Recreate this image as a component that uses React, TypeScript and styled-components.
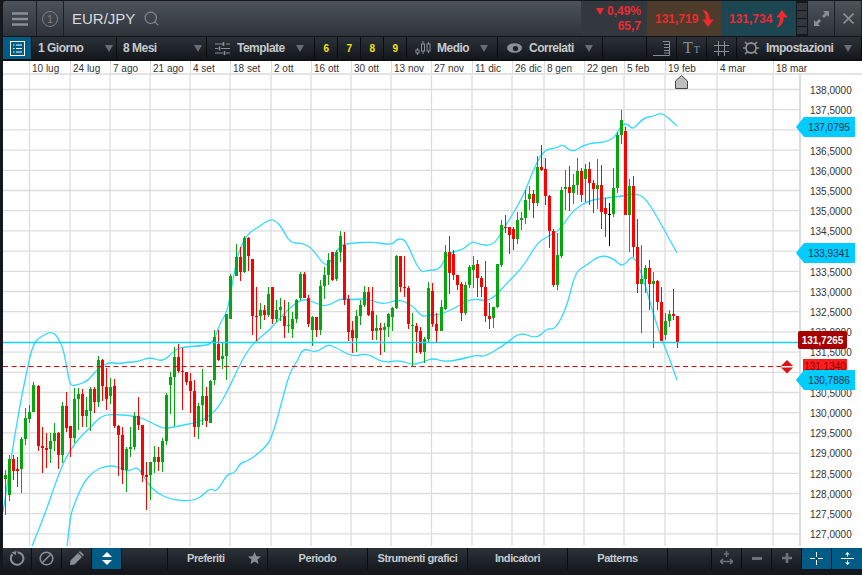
import React from "react";
import styled, { createGlobalStyle } from "styled-components";
import { Search } from "lucide-react";

type Row = [string, number, number, number, number];

interface Segment {
  ox: number;
  oy: number;
  start: number;
  rows: Row[];
}

// candles read off the chart: colour, high, body top, body bottom, low
const segments: Segment[] = [
  {
    ox: 0, oy: 330, start: 16,
    rows: [
      ["g", 420, 435, 447, 556], ["g", 375, 387, 495, 512], ["r", 375, 387, 423, 450], ["r", 380, 417, 423, 470],
      ["g", 320, 327, 417, 490], ["g", 235, 265, 327, 345], ["g", 225, 245, 267, 280], ["g", 155, 165, 245, 245],
    ],
  },
  {
    ox: 0, oy: 330, start: 115,
    rows: [
      ["r", 165, 168, 348, 362], ["r", 292, 348, 354, 428], ["r", 310, 354, 360, 415], ["g", 310, 333, 357, 400],
      ["g", 280, 309, 333, 362], ["r", 305, 309, 375, 417], ["g", 217, 228, 375, 400], ["r", 187, 228, 294, 305],
      ["r", 287, 288, 324, 380], ["g", 175, 207, 324, 340], ["g", 175, 192, 207, 300], ["r", 178, 192, 258, 290],
      ["g", 200, 240, 258, 290], ["g", 172, 177, 243, 303], ["r", 172, 177, 216, 250], ["g", 78, 90, 216, 230],
      ["r", 87, 90, 168, 213], ["r", 113, 171, 207, 240], ["g", 145, 171, 198, 222], ["r", 148, 168, 288, 295],
      ["r", 285, 288, 315, 438], ["r", 290, 315, 420, 462], ["g", 350, 357, 420, 487], ["g", 292, 351, 357, 381],
      ["g", 245, 258, 351, 360], ["r", 200, 258, 285, 300], ["r", 285, 285, 435, 455], ["r", 395, 435, 441, 540],
      ["g", 395, 396, 435, 510], ["g", 348, 381, 396, 430], ["r", 350, 381, 396, 423], ["g", 325, 333, 396, 425],
      ["g", 190, 195, 333, 345], ["g", 125, 141, 165, 252], ["g", 52, 81, 141, 288], ["r", 42, 81, 123, 128],
      ["r", 55, 123, 126, 240], ["r", 125, 126, 156, 165], ["r", 130, 153, 183, 250], ["r", 150, 183, 290, 320],
      ["g", 220, 228, 290, 327], ["g", 118, 198, 225, 285], ["r", 170, 198, 273, 290], ["g", 150, 153, 278, 278],
      ["g", 0, 22, 150, 165], ["r", 0, 42, 90, 93],
    ],
  },
  {
    ox: 220, oy: 210, start: 7,
    rows: [["g", 397, 438, 447, 477], ["g", 312, 312, 438, 510], ["g", 192, 198, 327, 327]],
  },
  {
    ox: 220, oy: 210, start: 47,
    rows: [
      ["g", 102, 141, 198, 198], ["r", 110, 141, 186, 212], ["g", 78, 84, 186, 190], ["r", 80, 84, 138, 182],
      ["r", 147, 147, 318, 375], ["r", 230, 318, 321, 393], ["g", 278, 300, 318, 358], ["r", 285, 300, 315, 330],
      ["g", 232, 252, 315, 320], ["r", 232, 232, 327, 342], ["g", 270, 300, 327, 335], ["g", 265, 291, 300, 333],
      ["r", 270, 318, 348, 384], ["g", 275, 345, 348, 370], ["g", 305, 327, 357, 384], ["g", 268, 270, 327, 340],
      ["g", 186, 192, 265, 270], ["r", 186, 192, 265, 265], ["r", 255, 265, 342, 352], ["g", 318, 321, 360, 408],
      ["r", 320, 321, 360, 381], ["g", 210, 228, 360, 375], ["g", 170, 195, 228, 268], ["g", 130, 150, 195, 225],
      ["r", 125, 126, 210, 212], ["g", 120, 126, 207, 212], ["g", 63, 78, 126, 155], ["r", 66, 105, 270, 285],
      ["r", 255, 267, 366, 393], ["r", 333, 360, 384, 428], ["g", 300, 318, 384, 425], ["g", 270, 285, 318, 345],
      ["g", 228, 246, 285, 290], ["r", 232, 246, 315, 318], ["r", 232, 303, 363, 390], ["g", 315, 354, 363, 390],
      ["r", 340, 354, 360, 435], ["g", 340, 351, 360, 425], ["g", 308, 312, 351, 380], ["g", 290, 294, 321, 363],
      ["g", 135, 138, 294, 296], ["r", 138, 138, 231, 246], ["r", 138, 231, 234, 262], ["r", 228, 234, 342, 356],
      ["g", 310, 345, 347, 468], ["r", 340, 348, 366, 430], ["r", 350, 363, 426, 432], ["g", 380, 387, 426, 458],
      ["g", 215, 234, 387, 395], ["r", 220, 243, 342, 350], ["r", 310, 342, 363, 396],
    ],
  },
  {
    ox: 440, oy: 100, start: 2,
    rows: [
      ["g", 600, 621, 693, 693], ["g", 435, 456, 627, 630], ["r", 408, 456, 519, 582], ["r", 450, 462, 525, 540],
      ["r", 525, 525, 555, 570], ["r", 545, 552, 639, 663], ["g", 545, 555, 639, 645], ["g", 495, 501, 555, 565],
      ["g", 468, 495, 510, 565], ["r", 480, 492, 534, 592], ["r", 528, 534, 561, 590], ["r", 483, 561, 648, 665],
      ["r", 610, 648, 657, 686], ["g", 621, 621, 654, 684], ["g", 492, 492, 621, 624], ["g", 360, 375, 495, 500],
      ["r", 345, 380, 384, 398], ["r", 380, 381, 405, 462], ["r", 380, 387, 417, 450], ["g", 335, 360, 417, 432],
      ["g", 335, 354, 360, 390], ["g", 270, 300, 354, 372], ["g", 258, 282, 297, 330], ["r", 270, 282, 308, 354],
      ["g", 168, 201, 309, 318], ["r", 135, 201, 210, 213], ["r", 174, 207, 288, 315], ["r", 285, 288, 393, 444],
      ["r", 387, 393, 555, 560], ["g", 400, 465, 555, 570], ["g", 262, 270, 468, 475], ["g", 210, 261, 267, 330],
      ["r", 198, 261, 279, 333], ["g", 222, 255, 279, 313], ["g", 175, 213, 255, 285], ["r", 205, 213, 285, 305],
      ["g", 192, 207, 237, 305], ["r", 185, 207, 249, 315], ["r", 240, 249, 267, 340], ["g", 178, 255, 267, 327],
      ["r", 195, 255, 336, 387], ["r", 295, 324, 342, 410], ["k", 310, 342, 344, 438], ["g", 205, 264, 342, 352],
      ["g", 95, 105, 264, 280], ["g", 30, 60, 105, 132], ["r", 80, 93, 345, 345], ["g", 238, 258, 345, 455],
    ],
  },
  {
    ox: 440, oy: 100, start: 580,
    rows: [
      ["r", 228, 258, 440, 470], ["r", 358, 441, 552, 578], ["g", 435, 537, 552, 698], ["g", 495, 504, 537, 580],
      ["r", 480, 504, 552, 630], ["g", 515, 543, 552, 744], ["r", 540, 543, 606, 630], ["r", 560, 606, 723, 723],
      ["g", 640, 663, 705, 720], ["g", 630, 642, 663, 680], ["r", 567, 642, 648, 660], ["r", 648, 648, 726, 744],
    ],
  },
];

const upperBand: number[][] = [
  [3, 512], [8, 480], [14, 440], [20, 405], [26, 375], [33, 343], [42, 336], [50, 332], [55, 334], [58, 338], [63, 348], [67, 368], [70, 386],
  [77, 385], [88, 381], [98, 368], [110, 362], [118, 364], [128, 362], [137, 362], [150, 357], [163, 362], [175, 350], [183, 347],
  [200, 346], [213, 344], [220, 323], [227, 313], [233, 280], [238, 253], [247, 234], [260, 226], [270, 219], [276, 221], [282, 228],
  [290, 243], [302, 243], [312, 248], [325, 267], [332, 260], [340, 245], [353, 243], [373, 242], [392, 245], [397, 239], [403, 239], [407, 243],
  [420, 273], [428, 270], [440, 270], [447, 253], [463, 250], [472, 241], [478, 244], [493, 246], [503, 230], [523, 197], [532, 173],
  [543, 150], [557, 148], [563, 144], [572, 153], [587, 143], [612, 142], [622, 124], [628, 124], [633, 130], [643, 118], [655, 116],
  [662, 112], [677, 126],
];

const middleBand: number[][] = [
  [32, 546], [43, 520], [60, 470], [70, 450], [82, 435], [90, 428], [100, 417], [110, 414], [135, 416], [147, 420], [163, 429], [173, 427],
  [200, 422], [210, 415], [218, 408], [228, 390], [242, 360], [253, 343], [270, 330], [287, 310], [303, 298], [315, 303], [327, 307], [340, 298],
  [353, 300], [367, 298], [383, 305], [398, 299], [412, 305], [422, 317], [428, 315], [440, 315], [457, 307], [472, 298], [490, 302],
  [507, 283], [523, 267], [537, 243], [547, 237], [560, 230], [573, 210], [590, 200], [607, 198], [623, 196], [637, 193], [647, 200],
  [660, 222], [677, 253],
];

const lowerBand: number[][] = [
  [67, 546], [70, 520], [72, 510], [83, 483], [95, 470], [107, 466], [117, 466], [128, 472], [138, 466], [147, 483], [158, 494], [173, 500],
  [190, 501], [200, 498], [210, 488], [217, 492], [227, 474], [235, 473], [240, 463], [248, 461], [263, 450], [272, 438], [283, 397],
  [290, 372], [298, 360], [303, 348], [317, 353], [327, 344], [337, 348], [352, 357], [367, 353], [383, 363], [400, 360], [412, 365],
  [423, 362], [433, 358], [445, 362], [462, 359], [477, 355], [485, 357], [507, 343], [520, 332], [537, 339], [547, 328], [555, 330],
  [567, 307], [575, 272], [587, 265], [600, 255], [613, 258], [623, 268], [633, 253], [643, 277], [653, 313], [662, 340], [670, 360], [677, 380],
];

const gridX = [29.5, 70, 110, 150, 190, 230, 271, 311, 351, 391, 431.5, 472, 512, 544, 584, 624, 665, 717, 773];
const gridY = Array.from({ length: 23 }, (_, i) => 89.5 + i * 20.2);

const dates = [
  { label: "10 lug", x: 29 }, { label: "24 lug", x: 70 }, { label: "7 ago", x: 110 }, { label: "21 ago", x: 150 },
  { label: "4 set", x: 190 }, { label: "18 set", x: 230 }, { label: "2 ott", x: 271 }, { label: "16 ott", x: 311 },
  { label: "30 ott", x: 351 }, { label: "13 nov", x: 391 }, { label: "27 nov", x: 431 }, { label: "11 dic", x: 472 },
  { label: "26 dic", x: 512 }, { label: "8 gen", x: 544 }, { label: "22 gen", x: 584 }, { label: "5 feb", x: 624 },
  { label: "19 feb", x: 665 }, { label: "4 mar", x: 717 }, { label: "18 mar", x: 773 },
];

// these three sit fully under a badge, so their row stays empty
const covered = ["137,0000", "134,0000", "131,0000"];
const prices = Array.from({ length: 23 }, (_, i) => (138 - i * 0.5).toFixed(4).replace(".", ","));

const smooth = (pts: number[][]) => {
  let d = `M${pts[0][0]} ${pts[0][1]}`;
  for (let i = 1; i < pts.length - 1; i++) {
    const mx = (pts[i][0] + pts[i + 1][0]) / 2;
    const my = (pts[i][1] + pts[i + 1][1]) / 2;
    d += ` Q${pts[i][0]} ${pts[i][1]} ${mx} ${my}`;
  }
  const last = pts[pts.length - 1];
  return `${d} L${last[0]} ${last[1]}`;
};

const candleColor: Record<string, string> = { g: "#04a80c", r: "#ff0000", k: "#000000" };

const Global = createGlobalStyle`
  html, body {
    margin: 0;
    padding: 0;
    background: #14181d;
  }
  * {
    box-sizing: border-box;
  }
`;

const Frame = styled.div`
  width: 862px;
  height: 575px;
  padding: 1px 0 0 3px;
  overflow: hidden;
  background: #14181d;
  font-family: "Liberation Sans", Arial, sans-serif;
`;

const TopBar = styled.div`
  display: flex;
  height: 36px;
  border-bottom: 1px solid #101317;
  border-top-left-radius: 3px;
  background: linear-gradient(#4c535b, #2e3339);
`;

const TopCell = styled.div<{ $w: number }>`
  display: flex;
  align-items: center;
  justify-content: center;
  flex: none;
  width: ${(p) => p.$w}px;
  border-right: 1px solid #1b1f24;
`;

const NumberBadge = styled.span`
  display: flex;
  align-items: center;
  justify-content: center;
  width: 16px;
  height: 16px;
  border: 1px solid #7c8186;
  border-radius: 50%;
  color: #7c8186;
  font-size: 11px;
`;

const Symbol = styled.div`
  display: flex;
  align-items: center;
  gap: 8px;
  flex: 1;
  padding-left: 8px;
  color: #d9dbdd;
  font-size: 15px;
  svg {
    color: #858a8f;
  }
`;

const ChangeBox = styled.div`
  flex: none;
  width: 66px;
  padding: 3px 6px 0 0;
  background: #33383e;
  color: #ee2a2f;
  font-size: 12px;
  font-weight: bold;
  line-height: 15px;
  text-align: right;
`;

const ChangeTop = styled.div`
  display: flex;
  align-items: center;
  justify-content: flex-end;
  gap: 3px;
`;

const DownMark = styled.i`
  width: 0;
  height: 0;
  border-left: 4.5px solid transparent;
  border-right: 4.5px solid transparent;
  border-top: 7px solid #ee2a2f;
`;

const QuoteBox = styled.div<{ $buy?: boolean }>`
  display: flex;
  align-items: center;
  flex: none;
  gap: 3px;
  width: ${(p) => (p.$buy ? 75 : 74)}px;
  padding-left: 8px;
  background: ${(p) => (p.$buy ? "#1b4652" : "#4d3b2b")};
  color: #ee2a2f;
  font-size: 12px;
  font-weight: bold;
`;

const QuoteStack = styled.div`
  display: flex;
  flex-direction: column;
  flex: none;
  gap: 1px;
  width: 12px;
  padding: 2px 1px;
  background: #15191d;
`;

const StackCell = styled.span`
  flex: 1;
  background: #31373d;
`;

const ToolBar = styled.div`
  display: flex;
  height: 24px;
  border-bottom: 2px solid #0e1114;
  background: linear-gradient(#2c3138, #14181d);
  color: #c6cacd;
  font-size: 12px;
  font-weight: bold;
  letter-spacing: -0.5px;
`;

const ToolCell = styled.div<{ $w: number; $pad?: number; $center?: boolean }>`
  display: flex;
  align-items: center;
  justify-content: ${(p) => (p.$center ? "center" : "flex-start")};
  flex: none;
  width: ${(p) => p.$w}px;
  padding-left: ${(p) => p.$pad ?? 0}px;
  border-right: 1px solid #0a0c0e;
`;

const ActiveTool = styled(ToolCell)`
  background: #005b85;
`;

const Caret = styled.i<{ $gap: number }>`
  width: 0;
  height: 0;
  margin-left: ${(p) => p.$gap}px;
  border-left: 4px solid transparent;
  border-right: 4px solid transparent;
  border-top: 7px solid #686e74;
`;

const HotKey = styled.span`
  color: #f4e21a;
  font-size: 10px;
`;

const TextSize = styled.span`
  color: #8b9095;
  font-family: "Liberation Serif", serif;
  font-size: 16px;
  font-weight: normal;
  letter-spacing: 0;
  small {
    font-size: 10px;
    margin-left: 1px;
  }
`;

const DateAxis = styled.div`
  display: flex;
  height: 14px;
  border-bottom: 2px solid #e4e4e4;
  background: #fff;
`;

const DateCell = styled.div<{ $w: number }>`
  flex: none;
  width: ${(p) => p.$w}px;
  padding-left: 2px;
  border-left: 1px solid #dcdcdc;
  color: #333;
  font-size: 10px;
  line-height: 15px;
  white-space: nowrap;
`;

const DateLead = styled.div`
  flex: none;
  width: 26px;
`;

const ChartRow = styled.div`
  position: relative;
  display: flex;
  height: 473px;
  background: #fff;
`;

const Plot = styled.svg`
  display: block;
  flex: none;
  width: 796px;
  height: 473px;
`;

const PriceAxis = styled.div`
  flex: 1;
  height: 471px;
  padding: 6px 0 0 9px;
  border-left: 2px solid #dcdcdc;
`;

const Tick = styled.div`
  height: 20.2px;
  color: #333;
  font-size: 10px;
  line-height: 20.2px;
`;

const Badge = styled.div<{ $top: number }>`
  position: absolute;
  top: ${(p) => p.$top}px;
  display: flex;
  align-items: center;
  justify-content: center;
  font-size: 10px;
`;

const LastPrice = styled(Badge)`
  left: 795px;
  width: 49px;
  height: 18px;
  border-radius: 2px;
  background: #a80000;
  color: #fff;
  font-weight: bold;
`;

const OrderPrice = styled(Badge)`
  left: 800px;
  width: 44px;
  height: 15px;
  background: #ff1c1c;
  color: #8a0000;
`;

const BandPrice = styled(Badge)`
  left: 793px;
  width: 59px;
  height: 20px;
  padding-left: 7px;
  background: #00ccff;
  color: #10333f;
  clip-path: polygon(0 50%, 8px 0, 100% 0, 100% 100%, 8px 100%);
`;

const BottomBar = styled.div`
  display: flex;
  height: 21px;
  background: linear-gradient(#2c3239, #171b20);
  color: #c6cacd;
  font-size: 11px;
  font-weight: bold;
  letter-spacing: -0.45px;
`;

const BarCell = styled.div<{ $w: number; $active?: boolean; $pad?: number }>`
  display: flex;
  align-items: center;
  justify-content: ${(p) => (p.$pad ? "flex-start" : "center")};
  flex: none;
  width: ${(p) => p.$w}px;
  padding-bottom: 1px;
  padding-left: ${(p) => p.$pad ?? 0}px;
  border-right: 1px solid #0a0c0e;
  background: ${(p) => (p.$active ? "#005b85" : "transparent")};
`;

const grey = "#8a8f94";

const MenuIcon = () => (
  <svg width="16" height="14" viewBox="0 0 16 14">
    <path d="M0 1.5H16M0 7H16M0 12.5H16" stroke={grey} strokeWidth="2.6" />
  </svg>
);

const HookArrow = ({ up }: { up?: boolean }) => (
  <svg width="13" height="17" viewBox="0 0 12 16" style={up ? { transform: "scaleY(-1)" } : undefined}>
    <path d="M1 0C5 0 8 3 8 9H12L6.5 16L1 9H4.5C4.5 5 3.5 2 1 0Z" fill="#ee2a2f" />
  </svg>
);

const ExpandIcon = () => (
  <svg width="15" height="15" viewBox="0 0 15 15" fill={grey}>
    <path d="M9 0H15V6L13 4L10 7L8 5L11 2Z" />
    <path d="M0 15V9L2 11L5 8L7 10L4 13L6 15Z" />
  </svg>
);

const CloseIcon = () => (
  <svg width="11" height="11" viewBox="0 0 11 11">
    <path d="M0.5 0.5L10.5 10.5M10.5 0.5L0.5 10.5" stroke={grey} strokeWidth="1.6" />
  </svg>
);

const ListIcon = () => (
  <svg width="15" height="15" viewBox="0 0 15 15">
    <rect x="0.5" y="0.5" width="14" height="14" fill="none" stroke="#fff" />
    <path d="M3 4H4.5M6 4H12M3 7.5H4.5M6 7.5H12M3 11H4.5M6 11H12" stroke="#fff" />
  </svg>
);

const SlidersIcon = () => (
  <svg width="15" height="13" viewBox="0 0 15 13" style={{ marginRight: 7 }}>
    <path d="M0 2H8M11 2H15M0 6.5H3M6 6.5H15M0 11H8M11 11H15" stroke={grey} strokeWidth="1.2" />
    <path d="M8.5 0V4M4.5 4.5V8.5M9.5 9V13" stroke={grey} strokeWidth="1.6" />
  </svg>
);

const CandlesIcon = () => (
  <svg width="16" height="14" viewBox="0 0 16 14" style={{ marginRight: 6 }} fill="none" stroke={grey}>
    <path d="M2.5 7V9M2.5 12V14M8 0V3M8 10V13M13.5 1V3M13.5 10V12" />
    <rect x="1" y="9" width="3" height="3" />
    <rect x="6.5" y="3" width="3" height="7" />
    <rect x="12" y="3" width="3" height="7" />
  </svg>
);

const EyeIcon = () => (
  <svg width="15" height="10" viewBox="0 0 15 10" style={{ marginRight: 7 }}>
    <ellipse cx="7.5" cy="5" rx="7.5" ry="4.8" fill={grey} />
    <circle cx="8.5" cy="5.5" r="2.6" fill="#1d2127" />
  </svg>
);

const RulerIcon = () => (
  <svg width="17" height="15" viewBox="0 0 17 15">
    <path d="M0 14.5H16.5V0.5H10M11 3.5H16M11 6.5H16M11 9.5H16M11 12H16" fill="none" stroke={grey} />
  </svg>
);

const HashIcon = () => (
  <svg width="15" height="15" viewBox="0 0 15 15">
    <path d="M4.5 0V15M10.5 0V15M0 4.5H15M0 10.5H15" stroke={grey} />
  </svg>
);

const GearIcon = () => (
  <svg width="16" height="16" viewBox="0 0 16 16" style={{ marginRight: 7 }}>
    <circle cx="8" cy="8" r="5" fill="none" stroke={grey} strokeWidth="1.8" />
    <path d="M2 2L4.5 4.5M14 2L11.5 4.5M2 14L4.5 11.5M14 14L11.5 11.5M0 8H2.5M13.5 8H16" stroke={grey} strokeWidth="1.6" />
  </svg>
);

const RefreshIcon = () => (
  <svg width="15" height="15" viewBox="0 0 15 15">
    <path d="M2.5 3.2A6.3 6.3 0 1 0 7.5 1.2" fill="none" stroke={grey} strokeWidth="2" />
    <path d="M6.5 0L1.5 1.2L5.5 4.2Z" fill={grey} />
  </svg>
);

const BanIcon = () => (
  <svg width="15" height="15" viewBox="0 0 15 15" fill="none" stroke={grey} strokeWidth="1.6">
    <circle cx="7.5" cy="7.5" r="6.3" />
    <path d="M3 12L12 3" />
  </svg>
);

const PencilIcon = () => (
  <svg width="14" height="14" viewBox="0 0 14 14" fill={grey}>
    <path d="M10 0L14 4L12.7 5.3L8.7 1.3Z" />
    <path d="M8 2L12 6L4.5 13.5L0 14L0.5 9.5Z" />
  </svg>
);

const UpDownIcon = () => (
  <svg width="10" height="13" viewBox="0 0 10 13" fill="#fff">
    <path d="M5 0L10 5H0Z" />
    <path d="M5 13L10 8H0Z" />
  </svg>
);

const StarIcon = () => (
  <svg width="13" height="12" viewBox="0 0 13 12" fill={grey} style={{ marginLeft: 23 }}>
    <path d="M6.5 0L8.3 4.2L13 4.6L9.4 7.6L10.5 12L6.5 9.6L2.5 12L3.6 7.6L0 4.6L4.7 4.2Z" />
  </svg>
);

const MoveIcon = () => (
  <svg width="13" height="14" viewBox="0 0 13 14" fill="none" stroke="#6c7278" strokeWidth="1.6">
    <path d="M6.5 0V6M4 3H9M1 10.5H12" />
    <path d="M3 8L0.5 10.5L3 13M10 8L12.5 10.5L10 13" />
  </svg>
);

const MinusIcon = () => (
  <svg width="10" height="3" viewBox="0 0 10 3">
    <rect width="10" height="3" fill="#6c7278" />
  </svg>
);

const PlusIcon = () => (
  <svg width="10" height="10" viewBox="0 0 10 10">
    <path d="M5 0V10M0 5H10" stroke="#6c7278" strokeWidth="2.6" />
  </svg>
);

const CrossIcon = () => (
  <svg width="13" height="13" viewBox="0 0 13 13">
    <path d="M6.5 0V5M6.5 8V13M0 6.5H5M8 6.5H13" stroke="#fff" />
  </svg>
);

const FitIcon = () => (
  <svg width="13" height="13" viewBox="0 0 13 13" fill="#fff">
    <path d="M0 6H13V7H0Z" />
    <path d="M6.5 0L9 2.5H7V4.5H6V2.5H4Z" />
    <path d="M6.5 13L9 10.5H7V8.5H6V10.5H4Z" />
  </svg>
);

const Candles = () => (
  <g shapeRendering="crispEdges">
    {segments.map((seg) =>
      seg.rows.map(([c, hi, top, bot, lo], i) => {
        const x = Math.round(seg.ox + (seg.start + i * 12) / 3);
        const y = (v: number) => Math.round(seg.oy + v / 3);
        const fill = candleColor[c];
        return (
          <g key={`${seg.ox}-${seg.start}-${i}`} fill={fill}>
            <rect x={x} y={y(hi)} width={1} height={Math.max(1, y(lo) - y(hi))} />
            <rect x={x - 1} y={y(top)} width={3} height={Math.max(1, y(bot) - y(top))} />
          </g>
        );
      })
    )}
  </g>
);

const App: React.FC = () => {
  return (
    <Frame>
      <Global />
      <TopBar>
        <TopCell $w={34}>
          <MenuIcon />
        </TopCell>
        <TopCell $w={27}>
          <NumberBadge>1</NumberBadge>
        </TopCell>
        <Symbol>
          EUR/JPY
          <Search size={17} strokeWidth={1.6} />
        </Symbol>
        <ChangeBox>
          <ChangeTop>
            <DownMark />
            0,49%
          </ChangeTop>
          65,7
        </ChangeBox>
        <QuoteBox>
          131,719
          <HookArrow />
        </QuoteBox>
        <QuoteBox $buy>
          131,734
          <HookArrow up />
        </QuoteBox>
        <QuoteStack>
          <StackCell />
          <StackCell />
          <StackCell />
          <StackCell />
        </QuoteStack>
        <TopCell $w={27}>
          <ExpandIcon />
        </TopCell>
        <TopCell $w={27}>
          <CloseIcon />
        </TopCell>
      </TopBar>

      <ToolBar>
        <ActiveTool $w={29} $center>
          <ListIcon />
        </ActiveTool>
        <ToolCell $w={85} $pad={6}>
          1 Giorno
          <Caret $gap={22} />
        </ToolCell>
        <ToolCell $w={90} $pad={6}>
          8 Mesi
          <Caret $gap={37} />
        </ToolCell>
        <ToolCell $w={108} $pad={8}>
          <SlidersIcon />
          Template
          <Caret $gap={11} />
        </ToolCell>
        <ToolCell $w={23} $center>
          <HotKey>6</HotKey>
        </ToolCell>
        <ToolCell $w={23} $center>
          <HotKey>7</HotKey>
        </ToolCell>
        <ToolCell $w={23} $center>
          <HotKey>8</HotKey>
        </ToolCell>
        <ToolCell $w={23} $center>
          <HotKey>9</HotKey>
        </ToolCell>
        <ToolCell $w={91} $pad={8}>
          <CandlesIcon />
          Medio
          <Caret $gap={11} />
        </ToolCell>
        <ToolCell $w={105} $pad={9}>
          <EyeIcon />
          Correlati
          <Caret $gap={11} />
        </ToolCell>
        <ToolCell $w={44} />
        <ToolCell $w={30} $center>
          <RulerIcon />
        </ToolCell>
        <ToolCell $w={30} $center>
          <TextSize>
            T<small>T</small>
          </TextSize>
        </ToolCell>
        <ToolCell $w={30} $center>
          <HashIcon />
        </ToolCell>
        <ToolCell $w={125} $pad={6}>
          <GearIcon />
          Impostazioni
          <Caret $gap={11} />
        </ToolCell>
      </ToolBar>

      <DateAxis>
        <DateLead />
        {dates.map((d, i) => (
          <DateCell key={d.label} $w={(dates[i + 1]?.x ?? 862) - d.x}>
            {d.label}
          </DateCell>
        ))}
      </DateAxis>

      <ChartRow>
        <Plot viewBox="3 75 796 473">
          <g stroke="#dcdcdc" strokeWidth="1.3">
            {gridX.map((x) => (
              <line key={x} x1={x} x2={x} y1={75} y2={546} />
            ))}
            {gridY.map((y) => (
              <line key={y} x1={3} x2={799} y1={y} y2={y} />
            ))}
          </g>
          <path d="M675.5 88.5V81L681.5 75.5L687.5 81V88.5Z" fill="#bdbdbd" stroke="#444" />
          <g fill="none" stroke="#33d9ff" strokeWidth="1.3">
            <path d={smooth(upperBand)} />
            <path d={smooth(middleBand)} />
            <path d={smooth(lowerBand)} />
          </g>
          <Candles />
          <line x1={3} x2={799} y1={342.5} y2={342.5} stroke="#13d3f5" strokeWidth="1.5" />
          <line x1={3} x2={781} y1={366.5} y2={366.5} stroke="#f00000" strokeDasharray="5 3.5" />
          <path d="M787 360L793 366H781Z" fill="#e01010" />
          <path d="M787 373.5L793 367.5H781Z" fill="#e01010" />
        </Plot>
        <PriceAxis>
          {prices.map((p) => (
            <Tick key={p}>{covered.includes(p) ? "" : p}</Tick>
          ))}
        </PriceAxis>
        <LastPrice $top={256}>131,7265</LastPrice>
        <OrderPrice $top={284}>131,1340</OrderPrice>
        <BandPrice $top={42}>137,0795</BandPrice>
        <BandPrice $top={168}>133,9341</BandPrice>
        <BandPrice $top={295}>130,7886</BandPrice>
      </ChartRow>

      <BottomBar>
        <BarCell $w={29}>
          <RefreshIcon />
        </BarCell>
        <BarCell $w={30}>
          <BanIcon />
        </BarCell>
        <BarCell $w={30}>
          <PencilIcon />
        </BarCell>
        <BarCell $w={30} $active>
          <UpDownIcon />
        </BarCell>
        <BarCell $w={46} />
        <BarCell $w={100} $pad={19}>
          Preferiti
          <StarIcon />
        </BarCell>
        <BarCell $w={100}>Periodo</BarCell>
        <BarCell $w={100}>Strumenti grafici</BarCell>
        <BarCell $w={100}>Indicatori</BarCell>
        <BarCell $w={100}>Patterns</BarCell>
        <BarCell $w={44} />
        <BarCell $w={30}>
          <MoveIcon />
        </BarCell>
        <BarCell $w={30}>
          <MinusIcon />
        </BarCell>
        <BarCell $w={30}>
          <PlusIcon />
        </BarCell>
        <BarCell $w={30} $active>
          <CrossIcon />
        </BarCell>
        <BarCell $w={31} $active>
          <FitIcon />
        </BarCell>
      </BottomBar>
    </Frame>
  );
};

export default App;
